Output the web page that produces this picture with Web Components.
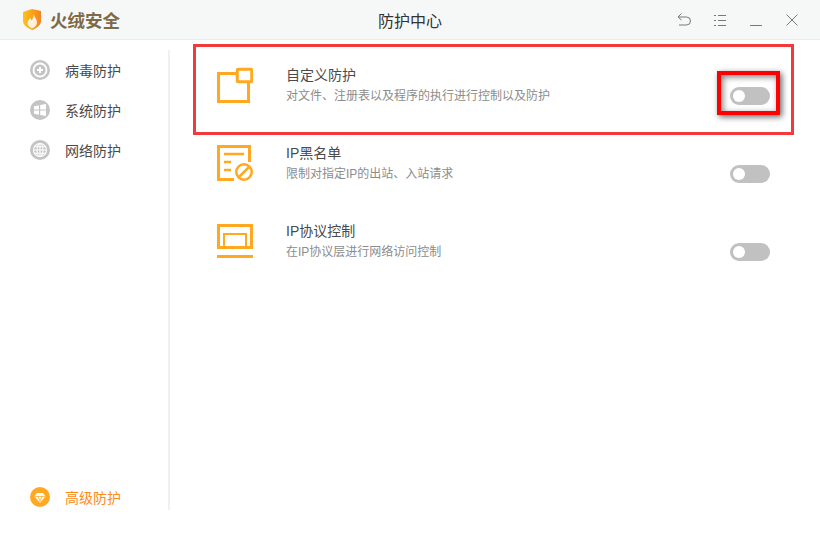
<!DOCTYPE html>
<html lang="zh">
<head>
<meta charset="utf-8">
<title>防护中心</title>
<style>
  html, body { margin: 0; padding: 0; background: #fff; }
  body { font-family: "Liberation Sans", "Noto Sans CJK SC", sans-serif; width: 820px; height: 540px; overflow: hidden; }
</style>
</head>
<body>
<app-window>
  <title-bar slot="top"></title-bar>
  <side-nav slot="side">
    <nav-item icon="virus">病毒防护</nav-item>
    <nav-item icon="windows">系统防护</nav-item>
    <nav-item icon="globe">网络防护</nav-item>
    <nav-item icon="gem" accent slot="bottom">高级防护</nav-item>
  </side-nav>
  <guard-row icon="custom" heading="自定义防护" desc="对文件、注册表以及程序的执行进行控制以及防护" marked></guard-row>
  <guard-row icon="blacklist" heading="IP黑名单" desc="限制对指定IP的出站、入站请求"></guard-row>
  <guard-row icon="protocol" heading="IP协议控制" desc="在IP协议层进行网络访问控制"></guard-row>
</app-window>

<script>
// 橙色线条图标
const RowIcons = {
  custom: `<svg width="36" height="37" viewBox="0 -1 36 37" fill="none" stroke="#ffa820" stroke-width="3">
    <path d="M19 5.500H1.500V33.500H31.500V15"/>
    <rect x="20.250" y="1.250" width="14.500" height="12.500" rx="1"/>
  </svg>`,
  blacklist: `<svg width="36" height="37" viewBox="0 0 36 37" fill="none" stroke="#ffa820" stroke-width="3">
    <path d="M17 34.500H1.500V1.500H32.500V17"/>
    <path d="M7 9h20M7 17h7M7 25h7" stroke-width="2.500"/>
    <circle cx="27" cy="27" r="7.750" stroke-width="2.500"/>
    <path d="M21.500 32.500l11-11" stroke-width="2.500"/>
  </svg>`,
  protocol: `<svg width="36" height="37" viewBox="0 -1 36 37" fill="none" stroke="#ffa820" stroke-width="3">
    <path d="M1.500 23.500V1.500h33v22z"/>
    <path d="M7 24V10h22v14" stroke-width="2"/>
    <path d="M0 32.500h36"/>
  </svg>`
}

const NavIcons = {
  virus: `<path d="M10 7v6M7 10h6" stroke="#fff" stroke-width="2"/><circle cx="10" cy="10" r="6.500" fill="none" stroke="#fff" stroke-width="1.800"/>`,
  windows: `<path d="M4 6.200l5-.9v4.200H4zM10.200 5.100l5.800-1v5.400H10.200zM4 10.500h5v4.200l-5-.9zM10.200 10.500H16v5.400l-5.800-1z" fill="#fff"/>`,
  globe: `<g fill="none" stroke="#fff" stroke-width="1.100"><circle cx="10" cy="10" r="6.500"/><ellipse cx="10" cy="10" rx="3" ry="6.500"/><path d="M3.500 10h13M4.500 6.700h11M4.500 13.300h11M10 3.500v13"/></g>`,
  gem: `<path d="M7 6h6l2.500 3.200L10 16 4.500 9.200z" fill="#fff"/><path d="M4.500 9.400h11M8 9.400 10 14.500l2-5.100" fill="none" stroke="#ffa820" stroke-width=".8"/>`
}

class AppWindow extends HTMLElement {
  constructor() {
    super()
    this.attachShadow({ mode: 'open' })
    this.shadowRoot.innerHTML = `
      <style>
        :host { display: flex; flex-direction: column; width: 820px; height: 540px; }
        .body { display: flex; flex: 1; min-height: 0; }
        main { flex: 1; padding: 8px 50px 0 47px; }
      </style>
      <slot name="top"></slot>
      <div class="body">
        <slot name="side"></slot>
        <main><slot></slot></main>
      </div>
    `
  }
}

class TitleBar extends HTMLElement {
  constructor() {
    super()
    this.attachShadow({ mode: 'open' })
    this.shadowRoot.innerHTML = `
      <style>
        :host { display: grid; grid-template-columns: 1fr auto 1fr; align-items: center; height: 39px; background: #f6f8f8; border-bottom: 1px solid #ececec; box-sizing: content-box; flex: none; }
        .brand { display: flex; align-items: center; gap: 9px; padding-left: 23px; color: #7d6a48; font-size: 17.500px; font-weight: 700; }
        .name { font-size: 16px; color: #333; }
        .tools { display: flex; justify-content: flex-end; gap: 20px; padding-right: 20px; }
        svg { display: block; }
      </style>
      <div class="brand">
        <svg width="18" height="21" viewBox="0 0 18 21">
          <defs><linearGradient id="g" x1="0" y1="0" x2="1" y2="0"><stop offset="0" stop-color="#ffc21a"/><stop offset="1" stop-color="#f5821f"/></linearGradient></defs>
          <path d="M0 3 9 0l9 2v10c0 4-4 7-8.500 9C4 19 0 16 0 12z" fill="url(#g)"/>
          <path d="M10.500 5c.5 3 3.500 5 3.500 8.500 0 3-2.500 5-5 6-2.500-1-4.500-3-4.500-5.500 0-2.500 2-3.500 3-5 .2 1.200.6 2 1.300 2.500C9.800 9.500 10.700 7.500 10.500 5z" fill="#fff" opacity=".85"/>
        </svg>
        <span>火绒安全</span>
      </div>
      <div class="name">防护中心</div>
      <div class="tools">
        <svg width="16" height="16" viewBox="0 0 16 16" fill="none" stroke="#777"><path d="M5.500 1.500 2 5l3.500 3M2 5h8.500a3.500 3.500 0 0 1 0 8H3"/></svg>
        <svg width="16" height="16" viewBox="0 0 16 16" fill="none" stroke="#777"><path d="M2 3.500h2M2 8.500h2M2 13.500h2M6 3.500h8M6 8.500h8M6 13.500h8"/></svg>
        <svg width="16" height="16" viewBox="0 0 16 16" fill="none" stroke="#777"><path d="M2 13.500h12"/></svg>
        <svg width="16" height="16" viewBox="0 0 16 16" fill="none" stroke="#777"><path d="M2.500 2.500l11 11M13.500 2.500l-11 11"/></svg>
      </div>
    `
  }
}

class SideNav extends HTMLElement {
  constructor() {
    super()
    this.attachShadow({ mode: 'open' })
    this.shadowRoot.innerHTML = `
      <style>
        :host { display: flex; flex-direction: column; justify-content: space-between; width: 168px; height: 460px; margin-top: 10px; margin-right: 2px; box-shadow: 2px 0 0 #f0f0f0; flex: none; }
        .list { display: flex; flex-direction: column; }
        .bottom { margin-bottom: -7px; }
      </style>
      <div class="list"><slot></slot></div>
      <div class="list bottom"><slot name="bottom"></slot></div>
    `
  }
}

class NavItem extends HTMLElement {
  constructor() {
    super()
    this.attachShadow({ mode: 'open' })
    const accent = this.hasAttribute('accent')
    const icon = NavIcons[this.getAttribute('icon')] || ''
    this.shadowRoot.innerHTML = `
      <style>
        :host { display: flex; align-items: center; gap: 15px; height: 40px; padding-left: 30px; font-size: 14px; color: ${accent ? '#ff8a14' : '#4a4a4a'}; }
        svg { display: block; flex: none; }
      </style>
      <svg width="20" height="20" viewBox="0 0 20 20"><circle cx="10" cy="10" r="10" fill="${accent ? '#ffa820' : '#c4c4c4'}"/>${icon}</svg>
      <span><slot></slot></span>
    `
  }
}

class ToggleSwitch extends HTMLElement {
  constructor() {
    super()
    this.attachShadow({ mode: 'open' })
    this.shadowRoot.innerHTML = `
      <style>
        :host { display: block; width: 40px; height: 18px; border-radius: 9px; background: #c1c1c1; position: relative; flex: none; }
        i { position: absolute; left: 3px; top: 3px; width: 12px; height: 12px; border-radius: 50%; background: #fff; }
      </style>
      <i></i>
    `
  }
}

class GuardRow extends HTMLElement {
  constructor() {
    super()
    this.attachShadow({ mode: 'open' })
    const marked = this.hasAttribute('marked')
    this.shadowRoot.innerHTML = `
      <style>
        :host { display: flex; align-items: flex-start; position: relative; height: 78px; }
        .icon { width: 69px; padding-top: 19px; box-sizing: border-box; flex: none; height: 78px; }
        .icon svg { display: block; }
        .text { flex: 1; padding-top: 17px; }
        .heading { font-size: 14px; line-height: 21px; color: #4a4a4a; }
        .desc { font-size: 12px; line-height: 20px; color: #8c8c8c; }
        toggle-switch { margin-top: 39px; }
        .outer { position: absolute; left: -24px; top: -4px; width: 595px; height: 85px; border: 3px solid #f33a3a; }
        .inner { position: absolute; right: -10px; top: 23px; width: 55px; height: 36px; border: 4px solid #f00; box-shadow: 2px 2px 6px rgba(0,0,0,.6), inset 2px 2px 6px rgba(0,0,0,.5); }
      </style>
      <div class="icon">${RowIcons[this.getAttribute('icon')] || ''}</div>
      <div class="text">
        <div class="heading">${this.getAttribute('heading') || ''}</div>
        <div class="desc">${this.getAttribute('desc') || ''}</div>
      </div>
      <toggle-switch></toggle-switch>
      ${marked ? '<div class="outer"></div><div class="inner"></div>' : ''}
    `
  }
}

customElements.define('toggle-switch', ToggleSwitch)
customElements.define('app-window', AppWindow)
customElements.define('title-bar', TitleBar)
customElements.define('side-nav', SideNav)
customElements.define('nav-item', NavItem)
customElements.define('guard-row', GuardRow)
</script>
</body>
</html>
